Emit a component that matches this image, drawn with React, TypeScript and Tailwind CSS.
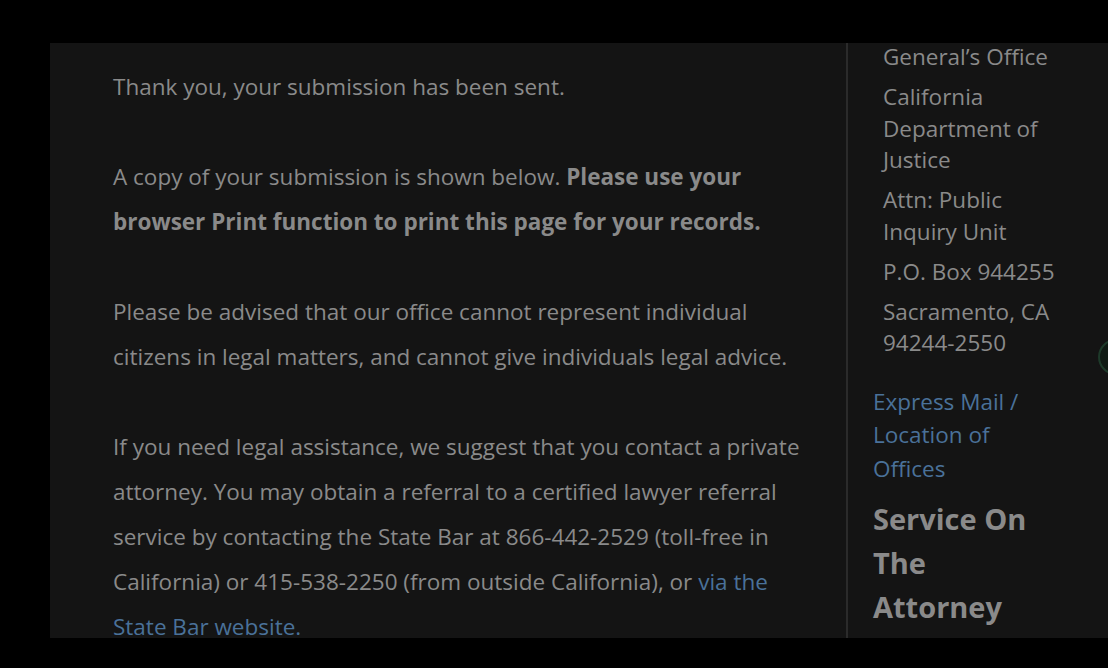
const addressLines = [
  ['General’s Office'],
  ['California', 'Department of', 'Justice'],
  ['Attn: Public', 'Inquiry Unit'],
  ['P.O. Box 944255'],
  ['Sacramento, CA', '94244-2550'],
];

const ConfirmationBody = () => (
  <div className="flex w-[796px] shrink-0 flex-col gap-[45px] pl-[63px] pr-[30px] pt-[21px] text-[22.5px] leading-[45px] text-[#8a8a8a]">
    <p>Thank you, your submission has been sent.</p>
    <p>
      A copy of your submission is shown below.{' '}
      <strong className="font-bold">Please use your browser Print function to print this page for your records.</strong>
    </p>
    <p>
      Please be advised that our office cannot represent individual citizens in legal matters, and cannot give
      individuals legal advice.
    </p>
    <p>
      If you need legal assistance, we suggest that you contact a private attorney. You may obtain a referral to a
      certified lawyer referral service by contacting the State Bar at 866-442-2529 (toll-free in California) or
      415-538-2250 (from outside California), or{' '}
      <a href="#" className="text-[#4a7199]">
        via the State Bar website.
      </a>
    </p>
  </div>
);

const Sidebar = () => (
  <aside className="flex min-w-0 flex-1 flex-col pl-[25px] pr-[20px] text-[#8a8a8a]">
    <div className="-mt-[2px] flex flex-col gap-[8.5px] pl-[10px] text-[22.5px] leading-[31.5px]">
      {addressLines.map(block => (
        <p key={block[0]}>
          {block.map(line => (
            <span key={line} className="block">
              {line}
            </span>
          ))}
        </p>
      ))}
    </div>
    <a href="#" className="mt-[26px] w-[160px] text-[22.5px] leading-[33.75px] text-[#4a7199]">
      Express Mail / Location of Offices
    </a>
    <h3 className="mt-[11px] w-[175px] text-[29px] font-bold leading-[44px]">Service On The Attorney</h3>
  </aside>
);

export default function App() {
  return (
    <div className="h-[668px] w-[1108px] overflow-hidden bg-black pl-[50px] pt-[43px] font-['Open_Sans',sans-serif]">
      <div className="relative flex h-[595px] overflow-hidden bg-[#141414]">
        <ConfirmationBody />
        <div className="w-[2px] shrink-0 bg-[#2b2b2b]" />
        <Sidebar />
        {/* floating help button, mostly off-screen */}
        <div className="absolute right-[-26px] top-[296px] h-[36px] w-[36px] rounded-full border-2 border-[#1e3a2a] bg-[#101a14]" />
      </div>
    </div>
  );
}
